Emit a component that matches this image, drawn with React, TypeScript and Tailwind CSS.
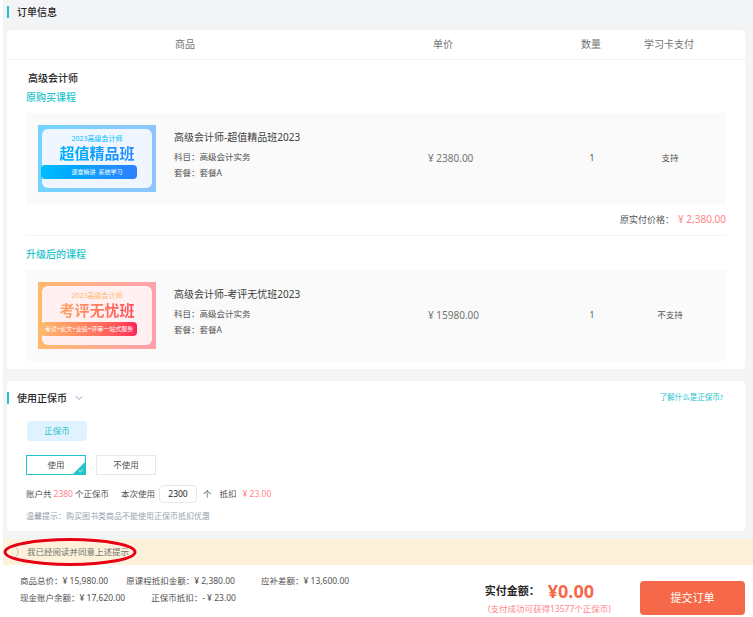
import { ChevronDown } from "lucide-react";

const courses = {
  old: {
    title: "高级会计师-超值精品班2023",
    price: "¥ 2380.00",
    support: "支持",
    year: "text-sky-400",
    frame: "from-sky-300 to-blue-300",
    inner: "bg-blue-50",
    big: "from-sky-400 to-blue-500",
    band: "from-sky-400 to-blue-500 pl-4",
    name: "超值精品班",
    slogan: "逐章精讲  系统学习",
  },
  next: {
    title: "高级会计师-考评无忧班2023",
    price: "¥ 15980.00",
    support: "不支持",
    year: "text-orange-300",
    frame: "from-orange-300 to-rose-300",
    inner: "bg-rose-50",
    big: "from-orange-300 to-rose-500",
    band: "from-orange-300 to-rose-500",
    name: "考评无忧班",
    slogan: "考试+论文+业绩+评审一站式服务",
  },
};

const Cover = ({ course }: { course: typeof courses.old }) => (
  <div className={`flex h-[67px] w-[118px] shrink-0 bg-linear-to-r p-1 ${course.frame}`}>
    <div className={`flex flex-1 flex-col items-start rounded-md pt-1.5 ${course.inner}`}>
      <div className={`w-full text-center text-[7px] leading-2 ${course.year}`}>2023高级会计师</div>
      <div
        className={`w-full bg-linear-to-r bg-clip-text text-center text-[15px] leading-5 font-bold text-transparent ${course.big}`}
      >
        {course.name}
      </div>
      <div
        className={`mt-0.5 -ml-px flex h-3.5 w-24 items-center justify-center rounded-sm bg-linear-to-r text-[6px] whitespace-pre text-white ${course.band}`}
      >
        {course.slogan}
      </div>
    </div>
  </div>
);

const CourseRow = ({ course }: { course: typeof courses.old }) => (
  <div className="flex items-center bg-neutral-50 py-3 pr-4 pl-3 text-[8.5px] text-neutral-600">
    <Cover course={course} />
    <div className="ml-4.5 flex-1 self-start pt-1">
      <div className="text-[10px] leading-4 text-neutral-700">{course.title}</div>
      <div className="mt-1 leading-4">科目：高级会计实务</div>
      <div className="leading-4">套餐：套餐A</div>
    </div>
    <div className="w-32 pl-1.5 text-[10px] text-neutral-500">{course.price}</div>
    <div className="w-20 pl-1 text-center">1</div>
    <div className="w-20 text-center">{course.support}</div>
  </div>
);

const Heading = ({ children }: { children: React.ReactNode }) => (
  <div className="h-3 border-l-2 border-[#22c4cc] pl-2 text-[10px] leading-3 font-medium text-neutral-800">
    {children}
  </div>
);

const SubHeading = ({ children }: { children: React.ReactNode }) => (
  <div className="text-[10px] leading-4 font-medium text-[#22c4cc]">{children}</div>
);

export default function App() {
  return (
    <div className="h-[617px] overflow-hidden bg-white font-['Noto_Sans','Noto_Sans_CJK_SC',sans-serif]">
      <div className="ml-0.75 bg-gray-100 pr-2 pb-2 pl-1">
        <div className="flex h-6 items-center">
          <Heading>订单信息</Heading>
        </div>

        <div className="mt-1.5 rounded-sm bg-white pb-2">
          <div className="flex h-7.5 items-center border-b border-gray-100 pr-9 pl-42 text-[10px] text-neutral-500">
            <div className="flex-1">商品</div>
            <div className="w-32 pl-3">单价</div>
            <div className="w-20 pl-1 text-center">数量</div>
            <div className="w-20 text-center">学习卡支付</div>
          </div>

          <div className="mx-4.75">
            <div className="mt-2 ml-0.5 flex h-5 items-center text-[10px] font-medium text-neutral-800">高级会计师</div>
            <div className="mt-px mb-2">
              <SubHeading>原购买课程</SubHeading>
            </div>
            <CourseRow course={courses.old} />
            <div className="flex h-8 items-center justify-end border-b border-gray-100 text-[9px] text-neutral-600">
              原实付价格：
              <span className="ml-1 text-[10px] text-red-400/80">¥ 2,380.00</span>
            </div>
            <div className="mt-0.5 flex h-8 items-center">
              <SubHeading>升级后的课程</SubHeading>
            </div>
            <CourseRow course={courses.next} />
          </div>
        </div>

        <div className="mt-3 rounded-sm bg-white pb-1.5">
          <div className="flex h-8.5 items-center pr-5.5">
            <Heading>使用正保币</Heading>
            <ChevronDown className="ml-1.5 size-3 text-gray-400" />
            <div className="ml-auto text-[7.5px] text-[#22c4cc]">了解什么是正保币?</div>
          </div>

          <div className="mx-4.75 text-[8.5px] text-neutral-600">
            <div className="mt-1.5 ml-px flex h-5 w-15 items-center justify-center rounded-sm bg-sky-100 text-[#22c4cc]">
              正保币
            </div>
            <div className="mt-3.5 flex gap-2.5">
              <div className="relative flex h-5 w-15 items-center justify-center border border-[#22c4cc]">
                使用
                <svg viewBox="0 0 12 12" className="absolute right-0 bottom-0 size-3">
                  <path d="M12 0V12H0Z" fill="#22c4cc" />
                  <path d="M6 8.5l1.5 1.3L10 7.5" fill="none" stroke="#fff" strokeWidth="0.8" />
                </svg>
              </div>
              <div className="flex h-5 w-15 items-center justify-center border border-gray-200">不使用</div>
            </div>
            <div className="mt-2.5 flex h-4.5 items-center">
              账户共
              <span className="mx-0.5 text-red-400/80">2380</span>
              个正保币
              <span className="ml-3">本次使用</span>
              <div className="ml-1 flex h-4.5 w-9.5 items-center justify-center rounded-sm border border-gray-200 text-neutral-800">
                2300
              </div>
              <span className="ml-1.5">个</span>
              <span className="ml-2">抵扣</span>
              <span className="ml-1.5 text-red-400/80">¥ 23.00</span>
            </div>
            <div className="mt-1 text-[8px] leading-4.5 text-gray-400">温馨提示：购买图书类商品不能使用正保币抵扣优惠</div>
          </div>
        </div>
      </div>

      <div className="relative ml-0.75 flex h-6.5 items-center bg-[#fef1d9] pl-6 text-[8.5px] text-neutral-500">
        我已经阅读并同意上述提示
        <svg viewBox="0 0 134 30" className="absolute -top-0.5 left-0 h-7.5 w-33.5">
          <path d="M13 10.5a6 6 0 0 1 0 9" fill="none" stroke="#bbbbbb" strokeWidth="1" />
          <ellipse cx="67" cy="15" rx="65" ry="12.5" fill="none" stroke="#ffffff" strokeOpacity="0.6" strokeWidth="4.5" />
          <ellipse cx="67" cy="15" rx="65" ry="12.5" fill="none" stroke="#e60012" strokeWidth="3" />
        </svg>
      </div>

      <div className="flex pr-2 pl-5">
        <div className="flex-1 pt-2 text-[8.5px] leading-4 text-neutral-600">
          <div className="flex">
            <span>商品总价：¥ 15,980.00</span>
            <span className="ml-4.5">原课程抵扣金额：¥ 2,380.00</span>
            <span className="ml-6.5">应补差额：¥ 13,600.00</span>
          </div>
          <div className="mt-px flex">
            <span>现金账户余额：¥ 17,620.00</span>
            <span className="ml-6.5">正保币抵扣：- ¥ 23.00</span>
          </div>
        </div>
        <div className="mt-4 mr-6.5 text-center">
          <div className="flex h-5 items-center justify-center pr-5">
            <span className="text-[11px] font-bold text-neutral-800">实付金额：</span>
            <span className="ml-2 text-lg font-bold text-[#f5694a]">¥0.00</span>
          </div>
          <div className="text-[8.5px] leading-4 text-red-400/80">(支付成功可获得13577个正保币)</div>
        </div>
        <button className="mt-4 flex h-[34px] w-[105px] items-center justify-center rounded-sm bg-[#f5694a] text-[11px] text-white">
          提交订单
        </button>
      </div>
    </div>
  );
}
